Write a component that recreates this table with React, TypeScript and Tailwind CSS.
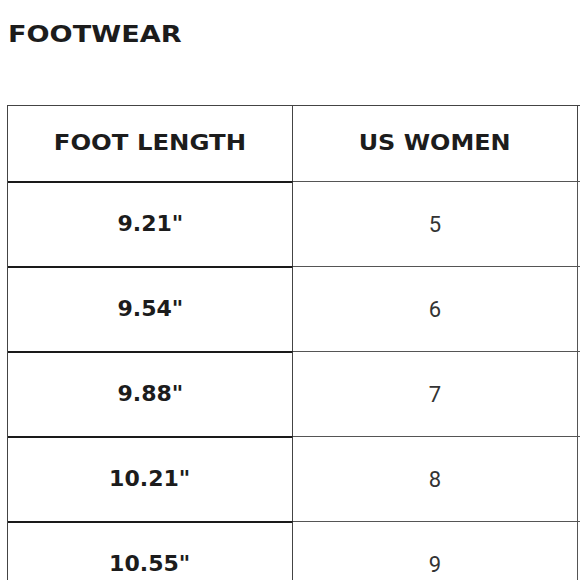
const rows = [
  { length: '9.21"', us: '5' },
  { length: '9.54"', us: '6' },
  { length: '9.88"', us: '7' },
  { length: '10.21"', us: '8' },
  { length: '10.55"', us: '9' },
];

export default function App() {
  return (
    <div className="h-[580px] w-[580px] overflow-hidden bg-white font-['DejaVu_Sans',sans-serif] text-[#1c1c1c]">
      {/* wide display face isn't installed, so DejaVu Bold gets stretched a bit */}
      <h2 className="pl-[8px] pt-[21px] text-[23px] font-bold leading-[27px]">
        <span className="inline-block origin-left scale-x-[1.18]">FOOTWEAR</span>
      </h2>

      <div className="ml-[7px] mt-[57px] w-[700px]">
        <div className="grid grid-cols-[285px_285px_130px] border-t border-l border-[#444]">
          <div className="flex h-[75px] items-center justify-center border-r border-[#444] text-[21px] font-bold">
            <span className="inline-block scale-x-[1.16]">FOOT LENGTH</span>
          </div>
          <div className="flex h-[75px] items-center justify-center border-r border-[#444] text-[21px] font-bold">
            <span className="inline-block scale-x-[1.14]">US WOMEN</span>
          </div>
          <div className="h-[75px]" />
        </div>

        {rows.map((r) => (
          <div
            key={r.length}
            className="grid grid-cols-[285px_285px_130px] border-l border-[#444]"
          >
            <div className="flex h-[85px] items-center justify-center border-t-2 border-r border-t-[#1a1a1a] border-r-[#444] text-[21px] font-bold">
              <span className="inline-block scale-x-[1.05]">{r.length}</span>
            </div>
            <div className="flex h-[85px] items-center justify-center border-t border-r border-[#555] font-['Roboto',sans-serif] text-[22px] text-[#333]">
              {r.us}
            </div>
            <div className="h-[85px] border-t border-[#555]" />
          </div>
        ))}
      </div>
    </div>
  );
}
